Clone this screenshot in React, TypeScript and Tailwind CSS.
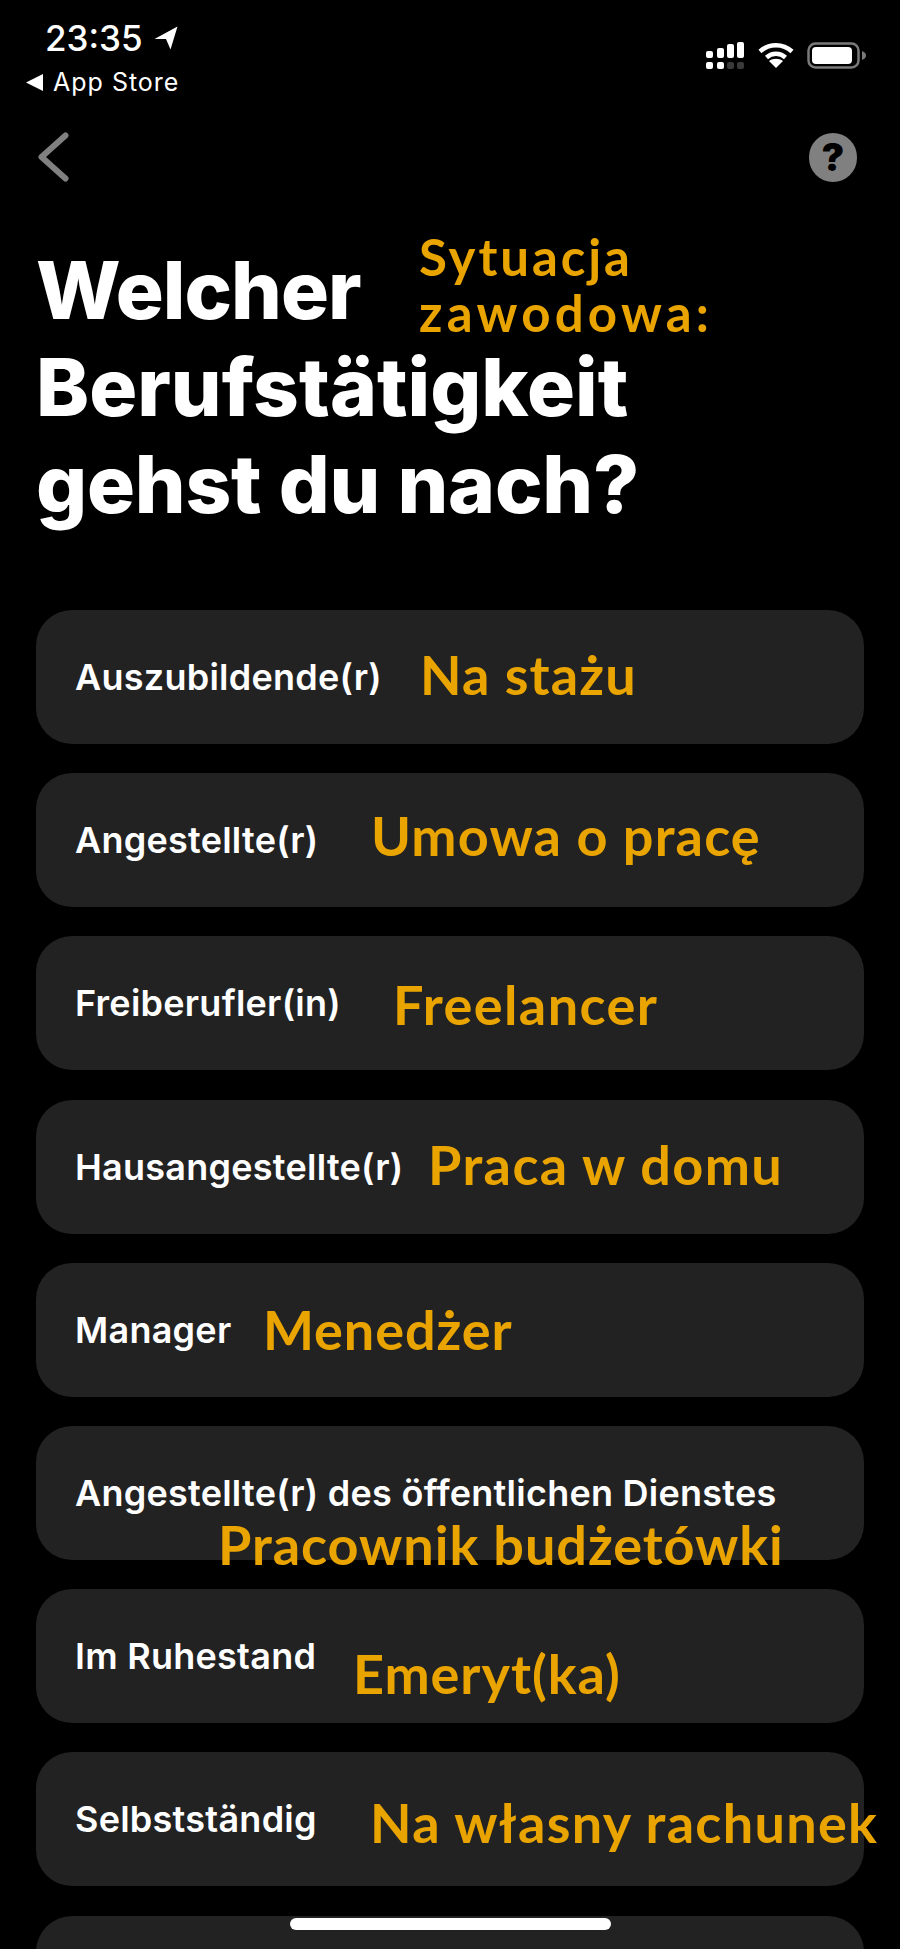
import React from "react";

const items: { label: string; note: string; cls: string }[] = [
  { label: "Auszubildende(r)", note: "Na stażu", cls: "left-[384px] top-[34px] tracking-[1.1px]" },
  { label: "Angestellte(r)", note: "Umowa o pracę", cls: "left-[335px] top-[32px] tracking-[1.15px]" },
  { label: "Freiberufler(in)", note: "Freelancer", cls: "left-[357px] top-[38px] tracking-[1.4px]" },
  { label: "Hausangestellte(r)", note: "Praca w domu", cls: "left-[392px] top-[34px] tracking-[1.4px]" },
  { label: "Manager", note: "Menedżer", cls: "left-[227px] top-[36px] tracking-[0.9px]" },
  { label: "Angestellte(r) des öffentlichen Dienstes", note: "Pracownik budżetówki", cls: "left-[182px] top-[88px] tracking-[0.95px]" },
  { label: "Im Ruhestand", note: "Emeryt(ka)", cls: "left-[317px] top-[54px] tracking-[0.95px]" },
  { label: "Selbstständig", note: "Na własny rachunek", cls: "left-[334px] top-[40px] tracking-[1.3px]" },
  { label: "", note: "", cls: "" },
];

export default function App() {
  return (
    <div className="relative h-[1949px] w-[900px] overflow-hidden bg-black font-['Inter',sans-serif] text-white">
      <header className="flex h-[112px] justify-between">
        <div className="pl-[26px] pt-[18px]">
          <div className="flex items-center gap-[11px] pl-[19px] text-[35px] font-medium leading-[40px]">
            <span>23:35</span>
            <svg width="24" height="24" viewBox="0 0 24 24" fill="white"><path d="M23.5 0.5 L0.5 13 L12 13 L16.5 23.5 Z" /></svg>
          </div>
          <div className="mt-[10px] flex items-center gap-[9px] text-[25px] leading-[29px] tracking-[1px]">
            <svg width="18" height="17" viewBox="0 0 18 17" fill="white"><path d="M0 8.5 L17 0 V17 Z" /></svg>
            <span>App Store</span>
          </div>
        </div>
        <div className="flex gap-[13px] pr-[34px] pt-[42px]">
          <svg width="39" height="27" viewBox="0 0 39 27" fill="white">
            <rect x="0" y="9" width="7" height="7" rx="2" />
            <rect x="11" y="6" width="7" height="10" rx="2" />
            <rect x="21" y="2" width="7" height="14" rx="2" />
            <rect x="31" y="0" width="7" height="16" rx="2" />
            <rect x="0" y="20" width="7" height="7" rx="2" />
            <rect x="11" y="20" width="7" height="7" rx="2" />
            <rect x="21" y="20" width="7" height="7" rx="2" fill="#3a3a3a" />
            <rect x="31" y="20" width="7" height="7" rx="2" fill="#3a3a3a" />
          </svg>
          <svg width="36" height="26" viewBox="0 0 36 26" fill="none" stroke="white" strokeWidth="4.5">
            <path d="M2 9.5 C11 1 25 1 34 9.5" />
            <path d="M8.5 15.5 C14 10.5 22 10.5 27.5 15.5" />
            <path d="M18 26 L11 19 C15 16 21 16 25 19 Z" fill="white" stroke="none" />
          </svg>
          <svg width="59" height="27" viewBox="0 0 59 27" fill="none">
            <rect x="1.5" y="1.5" width="50" height="24" rx="7" stroke="#7a7a7a" strokeWidth="2.5" />
            <rect x="5" y="5" width="40" height="17" rx="4" fill="white" />
            <path d="M55 9 C58 10 59 12 59 13.5 C59 15 58 17 55 18 Z" fill="#7a7a7a" />
          </svg>
        </div>
      </header>

      <nav className="mt-[20px] flex h-[50px] items-center justify-between pl-[38px] pr-[43px]">
        <svg width="31" height="50" viewBox="0 0 31 50" fill="none" stroke="#808080" strokeWidth="6" strokeLinecap="round" strokeLinejoin="round">
          <path d="M27.5 3.5 L3.5 25 L27.5 46.5" />
        </svg>
        <div className="flex h-[49px] w-[48px] items-center justify-center rounded-full bg-[#808080] text-[38px] font-black leading-none text-black">?</div>
      </nav>

      <div className="relative mt-[59px] pl-[36px]">
        <h1 className="text-[80px] font-extrabold leading-[97px]">
          <span className="block tracking-[-1px]">Welcher</span>
          <span className="block tracking-[0px]">Berufstätigkeit</span>
          <span className="block tracking-[-0.2px]">gehst du nach?</span>
        </h1>
        <div className="absolute left-[419px] top-[-12px] font-['Lato',sans-serif] text-[51px] font-bold leading-[56px] text-[#eaa400]">
          <span className="block tracking-[2.9px]">Sytuacja</span>
          <span className="block tracking-[4.2px]">zawodowa:</span>
        </div>
      </div>

      <ul className="mt-[78px] flex flex-col gap-[29.2px] px-[36px]">
        {items.map((it, i) => (
          <li key={i} className="relative flex h-[134px] items-center rounded-[36px] bg-[#222222] pl-[39px] text-[36px] font-semibold tracking-[0.25px]">
            {it.label && <span>{it.label}</span>}
            {it.note && (
              <span className={`absolute whitespace-nowrap font-['Lato',sans-serif] text-[54px] font-bold leading-[62px] text-[#eaa400] ${it.cls}`}>
                {it.note}
              </span>
            )}
          </li>
        ))}
      </ul>

      <div className="absolute left-[290px] top-[1918px] h-[12px] w-[321px] rounded-full bg-white" />
    </div>
  );
}
